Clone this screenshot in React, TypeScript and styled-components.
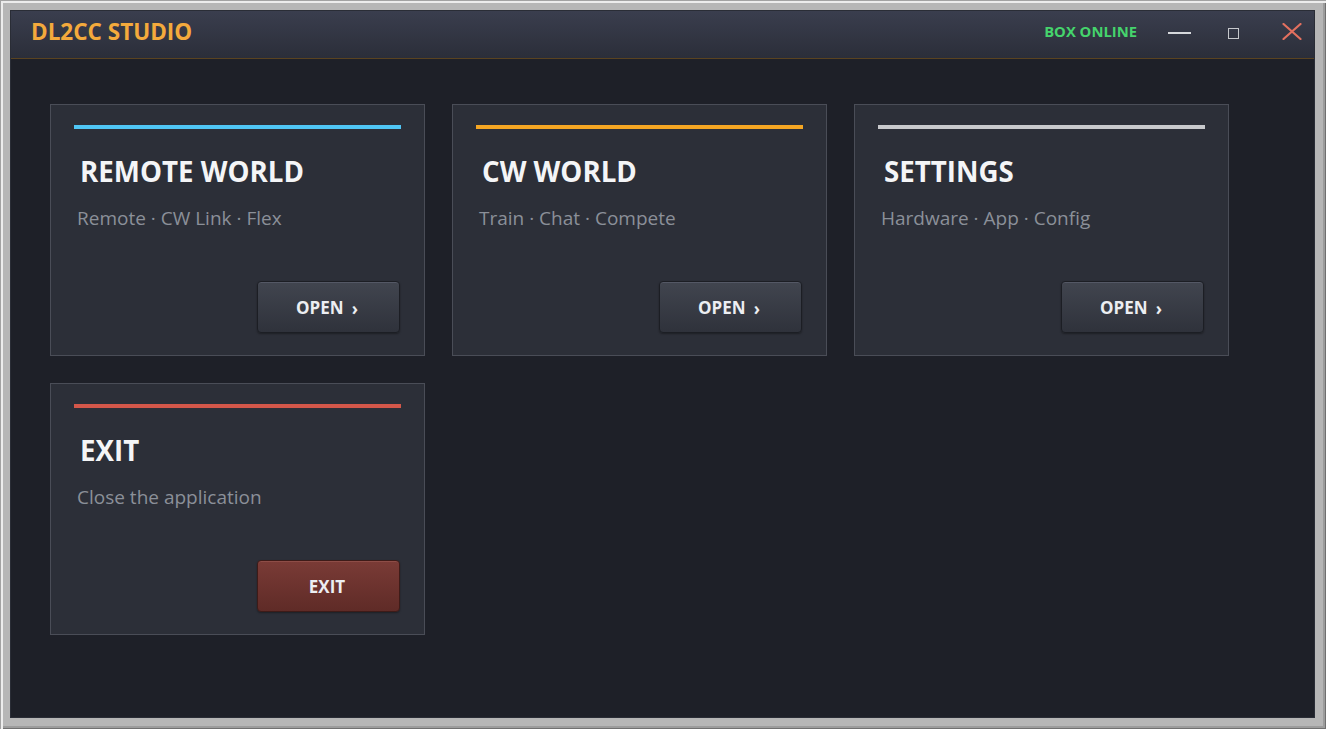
import React from "react";
import styled, { createGlobalStyle } from "styled-components";

const GlobalStyle = createGlobalStyle`
  html, body { margin: 0; padding: 0; background: #b4b4b4; }
  body { font-family: "Open Sans", "Noto Sans", sans-serif; }
  * { box-sizing: border-box; }
`;

const Frame = styled.div`
  width: 1326px;
  height: 729px;
  padding: 10px 11px 11px 10px;
  background: #b6b6b6;
  box-shadow: inset 1px 1px 0 #a2a2a2, inset 3px 3px 0 #ececec,
    inset -1px -1px 0 #707070, inset -3px -3px 0 #9c9c9c;
  display: flex;
`;

const Window = styled.div`
  flex: 1;
  display: flex;
  flex-direction: column;
  background: #1e2028;
  border: 1px solid #2a2d36;
`;

const TitleBar = styled.div`
  height: 48px;
  flex: none;
  display: flex;
  align-items: center;
  padding: 0 2px 7px 20px;
  background: linear-gradient(#3a3e4e, #2b2e39);
  border-bottom: 1px solid #5a4320;
`;

const AppTitle = styled.div`
  font-size: 22.5px;
  line-height: 31px;
  font-weight: 700;
  color: #f4aa3c;
  flex: 1;
`;

const Status = styled.div`
  font-size: 14.8px;
  line-height: 20px;
  font-weight: 700;
  color: #45d46c;
`;

const ControlButton = styled.div<{ $space: number }>`
  width: 40px;
  height: 30px;
  margin-left: ${(p) => p.$space}px;
  display: flex;
  align-items: center;
  justify-content: center;
`;

const MinGlyph = styled.div`
  width: 23px;
  height: 2px;
  margin-top: 3px;
  background: #d6d8dc;
`;

const MaxGlyph = styled.div`
  width: 11px;
  height: 11px;
  margin-top: 5px;
  border: 1.5px solid #c6c8cc;
`;

const Content = styled.div`
  flex: 1;
  padding: 45px 39px;
  display: grid;
  grid-template-columns: repeat(3, 375px);
  grid-auto-rows: 252px;
  gap: 27px 27px;
  align-content: start;
`;

const Card = styled.div`
  display: flex;
  flex-direction: column;
  padding: 20px 23px 22px 23px;
  background: #2c2f38;
  border: 1px solid #4a4d57;
`;

const AccentBar = styled.div<{ $color: string }>`
  height: 4px;
  background: ${(p) => p.$color};
  flex: none;
`;

const CardTitle = styled.div`
  margin: 25px 0 0 6px;
  font-size: 27.7px;
  line-height: 34px;
  font-weight: 700;
  color: #f4f5f7;
`;

const CardSub = styled.div`
  margin: 17px 0 0 3px;
  font-size: 19px;
  line-height: 26px;
  color: #8b9099;
`;

const ButtonRow = styled.div`
  margin-top: auto;
  display: flex;
  justify-content: flex-end;
`;

const ActionButton = styled.div<{ $danger?: boolean }>`
  width: 143px;
  height: 52px;
  margin-right: 1px;
  border-radius: 4px;
  display: flex;
  align-items: center;
  justify-content: center;
  gap: 8px;
  padding-right: 3px;
  font-size: 17px;
  font-weight: 700;
  color: #eceef2;
  border: 1px solid ${(p) => (p.$danger ? "#3e1b18" : "#1c1e24")};
  background: ${(p) =>
    p.$danger
      ? "linear-gradient(#7a3b36, #5f2b27)"
      : "linear-gradient(#41454f, #2f323b)"};
  box-shadow: inset 0 1px 0 ${(p) => (p.$danger ? "#8e4d47" : "#545865")},
    0 1px 2px rgba(0, 0, 0, 0.35);
`;

const Chevron = styled.span`
  font-size: 17px;
  font-weight: 700;
  margin-top: 2px;
`;

const CloseIcon = () => (
  <svg width="20" height="17" viewBox="0 0 20 17">
    <path d="M1.5 1 L18.5 16 M18.5 1 L1.5 16" stroke="#e3705f" strokeWidth="2.2" strokeLinecap="round" fill="none" />
  </svg>
);

const cards = [
  { color: "#4fc6f5", title: "REMOTE WORLD", sub: "Remote · CW Link · Flex", btn: "OPEN", danger: false },
  { color: "#f5a623", title: "CW WORLD", sub: "Train · Chat · Compete", btn: "OPEN", danger: false },
  { color: "#c8c9cc", title: "SETTINGS", sub: "Hardware · App · Config", btn: "OPEN", danger: false },
  { color: "#d4574a", title: "EXIT", sub: "Close the application", btn: "EXIT", danger: true },
];

export default function App() {
  return (
    <>
      <GlobalStyle />
      <Frame>
        <Window>
          <TitleBar>
            <AppTitle>DL2CC STUDIO</AppTitle>
            <Status>BOX ONLINE</Status>
            <ControlButton $space={22}>
              <MinGlyph />
            </ControlButton>
            <ControlButton $space={14}>
              <MaxGlyph />
            </ControlButton>
            <ControlButton $space={19}>
              <CloseIcon />
            </ControlButton>
          </TitleBar>
          <Content>
            {cards.map((c) => (
              <Card key={c.title}>
                <AccentBar $color={c.color} />
                <CardTitle>{c.title}</CardTitle>
                <CardSub>{c.sub}</CardSub>
                <ButtonRow>
                  <ActionButton $danger={c.danger}>
                    {c.btn}
                    {!c.danger && <Chevron>›</Chevron>}
                  </ActionButton>
                </ButtonRow>
              </Card>
            ))}
          </Content>
        </Window>
      </Frame>
    </>
  );
}
